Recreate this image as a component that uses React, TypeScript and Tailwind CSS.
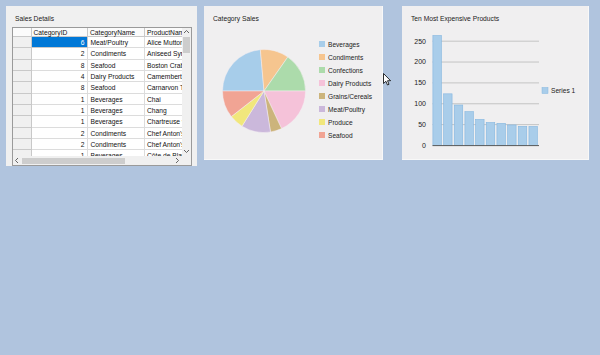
import React from "react";

const font = { fontFamily: '"Liberation Sans", Arial, sans-serif' };

const rows: [string, string, string][] = [
  ["6", "Meat/Poultry", "Alice Mutton"],
  ["2", "Condiments", "Aniseed Syrup"],
  ["8", "Seafood", "Boston Crab Meat"],
  ["4", "Dairy Products", "Camembert Pierrot"],
  ["8", "Seafood", "Carnarvon Tigers"],
  ["1", "Beverages", "Chai"],
  ["1", "Beverages", "Chang"],
  ["1", "Beverages", "Chartreuse verte"],
  ["2", "Condiments", "Chef Anton's Cajun Seasoning"],
  ["2", "Condiments", "Chef Anton's Gumbo Mix"],
  ["1", "Beverages", "Côte de Blaye"],
];

const slices = [
  { name: "Beverages", from: 270, to: 355, color: "#a7cdea" },
  { name: "Condiments", from: 355, to: 395, color: "#f6c58f" },
  { name: "Confections", from: 35, to: 90, color: "#acdbab" },
  { name: "Dairy Products", from: 90, to: 155, color: "#f5c2d9" },
  { name: "Grains/Cereals", from: 155, to: 171, color: "#ccb47c" },
  { name: "Meat/Poultry", from: 171, to: 212, color: "#cbb8db" },
  { name: "Produce", from: 212, to: 232, color: "#f1e77c" },
  { name: "Seafood", from: 232, to: 270, color: "#f1a494" },
];

const values = [263.5, 123.79, 97, 81, 62.5, 55, 53, 49.3, 46, 45.6];

function pt(cx: number, cy: number, r: number, a: number) {
  const rad = (a * Math.PI) / 180;
  return [cx + r * Math.sin(rad), cy - r * Math.cos(rad)];
}

function slicePath(from: number, to: number) {
  const cx = 42, cy = 42, r = 41.5;
  const [x1, y1] = pt(cx, cy, r, from);
  const [x2, y2] = pt(cx, cy, r, to);
  const large = to - from > 180 ? 1 : 0;
  return `M${cx},${cy} L${x1},${y1} A${r},${r} 0 ${large} 1 ${x2},${y2} Z`;
}

function Chevron({ dir }: { dir: "up" | "down" | "left" | "right" }) {
  const d =
    dir === "up"
      ? "M1,4 L3.5,1.5 L6,4"
      : dir === "down"
      ? "M1,2 L3.5,4.5 L6,2"
      : dir === "left"
      ? "M4,1 L1.5,3.5 L4,6"
      : "M2,1 L4.5,3.5 L2,6";
  return (
    <svg width="7" height="7" viewBox="0 0 7 7">
      <path d={d} fill="none" stroke="#555" strokeWidth="0.9" />
    </svg>
  );
}

function SalesGrid() {
  return (
    <div className="ml-[6px] mt-[4.5px] flex h-[139px] w-[180px] shrink-0 flex-col border border-[#9a9a9a] bg-white">
      <div className="flex h-[128px]">
        <div className="flex w-[169px] flex-col overflow-hidden">
          <div className="flex h-[9px] shrink-0 bg-[#fbfbfb] text-[6.7px] leading-[9px] text-[#111]">
            <div className="w-[19px] shrink-0 border-r border-b border-[#c9c9c9]" />
            <div className="w-[56px] shrink-0 border-r border-b border-[#c9c9c9] pl-[1.5px]">CategoryID</div>
            <div className="w-[57px] shrink-0 border-r border-b border-[#c9c9c9] pl-[2px]">CategoryName</div>
            <div className="w-[60px] shrink-0 overflow-hidden whitespace-nowrap border-b border-[#c9c9c9] pl-[2px]">ProductName</div>
          </div>
          {rows.map((r, i) => (
            <div key={i} className="flex h-[11.33px] shrink-0 text-[6.7px] leading-[11px] text-[#111]">
              <div className="w-[19px] shrink-0 border-r border-b border-[#c9c9c9] bg-[#f0f0f0]" />
              <div
                className={
                  i === 0
                    ? "w-[56px] shrink-0 border-r border-b border-[#c9c9c9] bg-[#0078d7] pr-[2.5px] text-right text-white"
                    : "w-[56px] shrink-0 border-r border-b border-[#dcdcdc] pr-[2.5px] text-right"
                }
              >
                {r[0]}
              </div>
              <div className="w-[57px] shrink-0 overflow-hidden whitespace-nowrap border-r border-b border-[#dcdcdc] pl-[2.5px]">{r[1]}</div>
              <div className="w-[80px] shrink-0 overflow-hidden whitespace-nowrap border-b border-[#dcdcdc] pl-[2px]">{r[2]}</div>
            </div>
          ))}
        </div>
        <div className="flex w-[9px] shrink-0 flex-col items-center bg-[#f0f0f0]">
          <div className="flex h-[9px] items-center justify-center">
            <Chevron dir="up" />
          </div>
          <div className="h-[16px] w-[7px] bg-[#cdcdcd]" />
          <div className="flex-1" />
          <div className="flex h-[9px] items-center justify-center">
            <Chevron dir="down" />
          </div>
        </div>
      </div>
      <div className="flex h-[9px] bg-[#f0f0f0]">
        <div className="flex w-[9px] items-center justify-center">
          <Chevron dir="left" />
        </div>
        <div className="flex flex-1 items-center">
          <div className="h-[6px] w-[103px] bg-[#cdcdcd]" />
        </div>
        <div className="flex w-[9px] items-center justify-center">
          <Chevron dir="right" />
        </div>
        <div className="w-[9px] bg-[#f0f0f0]" />
      </div>
    </div>
  );
}

function PieChart() {
  return (
    <div className="flex items-start">
      <svg className="ml-[18px] mt-[26px] shrink-0" width="84" height="84" viewBox="0 0 84 84">
        {slices.map((s) => (
          <path key={s.name} d={slicePath(s.from, s.to)} fill={s.color} stroke="#f4eef2" strokeWidth="0.5" />
        ))}
      </svg>
      <div className="ml-[13px] mt-[15px] flex flex-col">
        {slices.map((s) => (
          <div key={s.name} className="flex h-[13px] items-center">
            <div className="h-[6px] w-[6px]" style={{ background: s.color }} />
            <span className="ml-[3px] text-[6.6px] leading-[9px] text-[#222]">{s.name}</span>
          </div>
        ))}
      </div>
    </div>
  );
}

function BarChart() {
  const y = (v: number) => 122.5 - v * 0.4173;
  const ticks = [0, 50, 100, 150, 200, 250];
  return (
    <svg width="187" height="137" viewBox="0 0 187 137" className="shrink-0">
      {ticks.map((t) => (
        <g key={t}>
          {t > 0 && <line x1="30.5" x2="137" y1={y(t)} y2={y(t)} stroke="#c4c4c4" strokeWidth="1" />}
          <text x="24" y={y(t) + 2.4} textAnchor="end" fontSize="7" fill="#222" style={font}>
            {t}
          </text>
        </g>
      ))}
      {values.map((v, i) => (
        <rect
          key={i}
          x={30.9 + i * 10.67}
          y={y(v)}
          width={8.5}
          height={v * 0.4173}
          fill="#a9cdea"
          stroke="#84b6e0"
          strokeWidth="0.6"
        />
      ))}
      <line x1="30.5" x2="137" y1="122.6" y2="122.6" stroke="#5a5a5a" strokeWidth="1" />
      <rect x="140" y="64.5" width="6" height="6" fill="#a9cdea" stroke="#84b6e0" strokeWidth="0.5" />
      <text x="149" y="69.8" fontSize="6.6" fill="#222" style={font}>
        Series 1
      </text>
    </svg>
  );
}

export default function App() {
  return (
    <div className="relative h-[355px] w-[600px] overflow-hidden bg-[#b0c4de]" style={font}>
      <div className="flex items-start pl-[6px] pt-[6px]">
        <div className="flex h-[160px] w-[191px] shrink-0 flex-col overflow-hidden bg-[#f0f0f0]">
          <div className="pl-[9px] pt-[7.5px] text-[6.7px] leading-[9px] text-[#222]">Sales Details</div>
          <SalesGrid />
        </div>
        <div className="ml-[7px] flex h-[154px] w-[179px] shrink-0 flex-col border-r border-b border-[#f8f8f8] bg-[#f0eff0]">
          <div className="pl-[9px] pt-[7.5px] text-[6.7px] leading-[9px] text-[#222]">Category Sales</div>
          <PieChart />
        </div>
        <div className="ml-[19px] flex h-[154px] w-[187px] shrink-0 flex-col border-r border-b border-[#f8f8f8] bg-[#f0eff0]">
          <div className="pl-[9px] pt-[7.5px] text-[6.7px] leading-[9px] text-[#222]">Ten Most Expensive Products</div>
          <BarChart />
        </div>
      </div>
      <svg className="absolute left-[383px] top-[73px]" width="10" height="14" viewBox="0 0 10 14">
        <path d="M0.5,0.5 L0.5,10.5 L2.9,8.3 L4.5,12 L6,11.3 L4.5,7.7 L7.6,7.7 Z" fill="#fff" stroke="#000" strokeWidth="0.8" />
      </svg>
    </div>
  );
}
